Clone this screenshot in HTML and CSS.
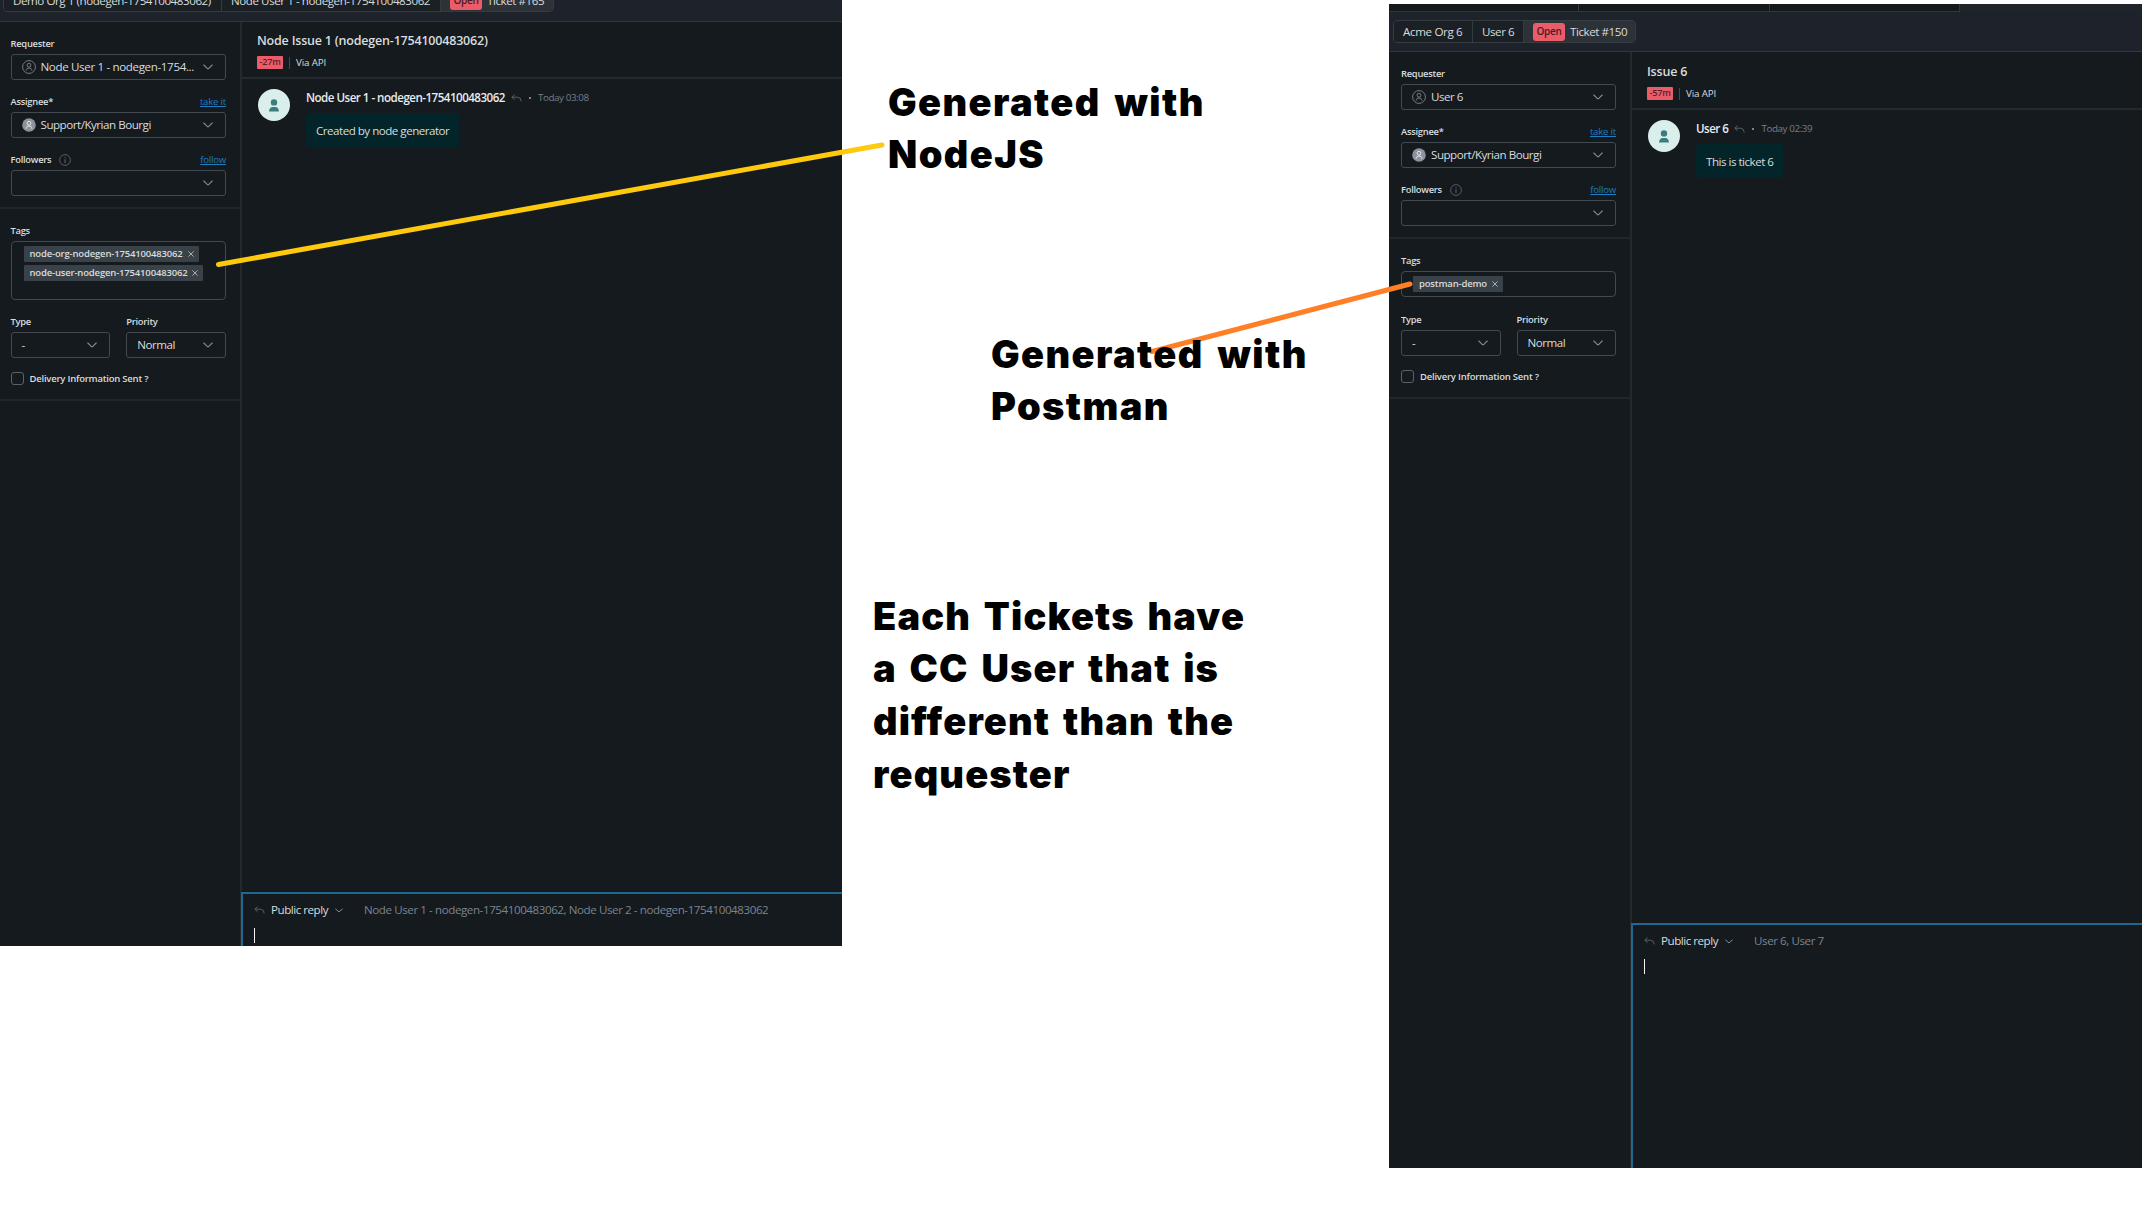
FILE: index.html
```html
<!DOCTYPE html>
<html lang="en">
<head>
<meta charset="utf-8">
<title>Generated tickets</title>
<link rel="stylesheet" href="styles.css">
</head>
<body>
<svg class="defs" width="0" height="0" aria-hidden="true">
  <symbol id="chev" viewBox="0 0 10 6"><path d="M.8 1 L4 4.2 Q5 5 6 4.2 L9.2 1" fill="none" stroke="currentColor" stroke-width="1.1" stroke-linecap="round"/></symbol>
  <symbol id="user-o" viewBox="0 0 14 14"><circle cx="7" cy="7" r="6.4" fill="none" stroke="currentColor"/><circle cx="7" cy="5.2" r="1.9" fill="none" stroke="currentColor"/><path d="M4.2 10.6 V9.8 Q4.4 8 7 8 T9.8 9.8 V10.6" fill="none" stroke="currentColor"/></symbol>
  <symbol id="user-f" viewBox="0 0 14 14"><circle cx="7" cy="7" r="6.8" fill="#8a939d"/><circle cx="7" cy="5.2" r="1.9" fill="none" stroke="#e3e6e8"/><path d="M4.2 10.8 V9.8 Q4.4 8 7 8 T9.8 9.8 V10.8" fill="none" stroke="#e3e6e8"/></symbol>
  <symbol id="info" viewBox="0 0 12 12"><circle cx="6" cy="6" r="5.4" fill="none" stroke="currentColor" stroke-width=".9"/><path d="M6 5.2V9M6 3V4.1" stroke="currentColor"/></symbol>
  <symbol id="person" viewBox="0 0 10 13"><circle cx="5" cy="3.4" r="3.2" fill="currentColor"/><path d="M0 12.6 Q.4 8 3.6 8 H6.4 Q9.6 8 10 12.6Z" fill="currentColor"/></symbol>
  <symbol id="reply" viewBox="0 0 11 8"><path d="M3.6 .6 L.8 3.2 L3.6 5.8 M.8 3.2 H6.5 Q10.2 3.4 10.2 7.4" fill="none" stroke="currentColor"/></symbol>
  <symbol id="x" viewBox="0 0 6 6"><path d="M.4 .4 L5.6 5.6 M5.6 .4 L.4 5.6" stroke="currentColor" stroke-width=".9"/></symbol>
</svg>
<div class="canvas">
  <section class="panel panel-node">
    <header class="topbar">
      <nav class="crumbs">
        <span class="crumb c-org">Demo Org 1 (nodegen-1754100483062)</span>
        <span class="crumb c-user">Node User 1 - nodegen-1754100483062</span>
        <span class="crumb active"><b class="open">Open</b>Ticket #165</span>
      </nav>
    </header>
    <div class="columns">
      <aside class="side">
        <div class="group people">
          <div class="label"><span>Requester</span></div>
          <div class="field"><svg class="who outline"><use href="#user-o"/></svg><span class="value">Node User 1 - nodegen-1754...</span><svg class="chev"><use href="#chev"/></svg></div>
          <div class="label"><span>Assignee*</span><a>take it</a></div>
          <div class="field"><svg class="who"><use href="#user-f"/></svg><span class="value tight">Support/Kyrian Bourgi</span><svg class="chev"><use href="#chev"/></svg></div>
          <div class="label"><span>Followers</span><svg class="info"><use href="#info"/></svg><a>follow</a></div>
          <div class="field"><span class="value"></span><svg class="chev"><use href="#chev"/></svg></div>
        </div>
        <div class="group meta">
          <div class="label"><span>Tags</span></div>
          <div class="tags">
            <span class="tag">node-org-nodegen-1754100483062<svg><use href="#x"/></svg></span>
            <span class="tag">node-user-nodegen-1754100483062<svg><use href="#x"/></svg></span>
          </div>
          <div class="pair">
            <div><div class="label"><span>Type</span></div><div class="field"><span class="value">-</span><svg class="chev"><use href="#chev"/></svg></div></div>
            <div><div class="label"><span>Priority</span></div><div class="field"><span class="value tight">Normal</span><svg class="chev"><use href="#chev"/></svg></div></div>
          </div>
          <div class="check"><i class="box"></i><span>Delivery Information Sent ?</span></div>
        </div>
      </aside>
      <main class="main">
        <div class="head"><h1>Node Issue 1 (nodegen-1754100483062)</h1><div class="sub"><b class="sla">-27m</b><i class="bar"></i><span>Via API</span></div></div>
        <div class="thread">
          <div class="avatar"><svg><use href="#person"/></svg></div>
          <div class="msg">
            <div class="by"><b>Node User 1 - nodegen-1754100483062</b><svg class="reply"><use href="#reply"/></svg><i class="dot"></i><time>Today 03:08</time></div>
            <p class="bubble">Created by node generator</p>
          </div>
        </div>
        <div class="composer">
          <div class="mode"><svg class="reply"><use href="#reply"/></svg><span class="kind">Public reply</span><svg class="chev small"><use href="#chev"/></svg><span class="cc">Node User 1 - nodegen-1754100483062, Node User 2 - nodegen-1754100483062</span></div>
          <i class="caret"></i>
        </div>
      </main>
    </div>
  </section>
  <section class="notes">
    <p class="note n1">Generated with<br>NodeJS</p>
    <p class="note n2">Generated with<br>Postman</p>
    <p class="note n3">Each Tickets have<br>a CC User that is<br>different than the<br>requester</p>
  </section>
  <section class="panel panel-postman">
    <div class="strip"><i></i><i></i><i></i></div>
    <header class="topbar">
      <nav class="crumbs">
        <span class="crumb c-org">Acme Org 6</span>
        <span class="crumb c-user">User 6</span>
        <span class="crumb active"><b class="open">Open</b>Ticket #150</span>
      </nav>
    </header>
    <div class="columns">
      <aside class="side">
        <div class="group people">
          <div class="label"><span>Requester</span></div>
          <div class="field"><svg class="who outline"><use href="#user-o"/></svg><span class="value tight">User 6</span><svg class="chev"><use href="#chev"/></svg></div>
          <div class="label"><span>Assignee*</span><a>take it</a></div>
          <div class="field"><svg class="who"><use href="#user-f"/></svg><span class="value tight">Support/Kyrian Bourgi</span><svg class="chev"><use href="#chev"/></svg></div>
          <div class="label"><span>Followers</span><svg class="info"><use href="#info"/></svg><a>follow</a></div>
          <div class="field"><span class="value"></span><svg class="chev"><use href="#chev"/></svg></div>
        </div>
        <div class="group meta">
          <div class="label"><span>Tags</span></div>
          <div class="tags">
            <span class="tag">postman-demo<svg><use href="#x"/></svg></span>
          </div>
          <div class="pair">
            <div><div class="label"><span>Type</span></div><div class="field"><span class="value">-</span><svg class="chev"><use href="#chev"/></svg></div></div>
            <div><div class="label"><span>Priority</span></div><div class="field"><span class="value tight">Normal</span><svg class="chev"><use href="#chev"/></svg></div></div>
          </div>
          <div class="check"><i class="box"></i><span>Delivery Information Sent ?</span></div>
        </div>
      </aside>
      <main class="main">
        <div class="head"><h1>Issue 6</h1><div class="sub"><b class="sla">-57m</b><i class="bar"></i><span>Via API</span></div></div>
        <div class="thread">
          <div class="avatar"><svg><use href="#person"/></svg></div>
          <div class="msg">
            <div class="by"><b>User 6</b><svg class="reply"><use href="#reply"/></svg><i class="dot"></i><time>Today 02:39</time></div>
            <p class="bubble">This is ticket 6</p>
          </div>
        </div>
        <div class="composer">
          <div class="mode"><svg class="reply"><use href="#reply"/></svg><span class="kind">Public reply</span><svg class="chev small"><use href="#chev"/></svg><span class="cc">User 6, User 7</span></div>
          <i class="caret"></i>
        </div>
      </main>
    </div>
  </section>
  <svg class="pointers" viewBox="0 0 2142 1221" aria-hidden="true">
    <path d="M218.5 264.5L882 145" stroke="#ffc90e"/>
    <path d="M1152 351.5L1410 284" stroke="#ff7f27"/>
  </svg>
</div>
</body>
</html>
```
FILE: styles.css
```css
* { box-sizing: border-box; }
body { margin: 0; background: #fff; }
.defs { position: absolute; }
.canvas {
  position: relative;
  display: flex;
  align-items: flex-start;
  width: 2142px;
  height: 1221px;
  overflow: hidden;
}

/* pen strokes drawn over the panels, under the note text */
.pointers { position: absolute; left: 0; top: 0; width: 2142px; height: 1221px; z-index: 1; }
.pointers path { fill: none; stroke-width: 5; stroke-linecap: round; }

.notes {
  position: relative;
  z-index: 2;
  width: 547px;
  color: #000;
  font: 900 38px/52.4px Inter, "Liberation Sans", sans-serif;
  letter-spacing: 1.4px;
  word-spacing: 5px;
}
.note { margin: 0; white-space: nowrap; }
.n1 { padding: 76px 0 0 46px; }
.n2 { padding: 147px 0 0 149px; }
.n3 { padding: 157px 0 0 31px; line-height: 52.7px; letter-spacing: 1.15px; word-spacing: 4px; }

.panel {
  display: flex;
  flex-direction: column;
  overflow: hidden;
  background: #151a1e;
  color: #d8dcde;
  font: 11.6px/14px "Open Sans", "Noto Sans", sans-serif;
  white-space: nowrap;
}
.panel-node { width: 842px; height: 946px; }
.panel-postman { width: 753px; height: 1164px; margin-top: 4px; }
svg { display: block; flex: none; }

.strip {
  display: flex;
  flex: none;
  width: 571px;
  height: 8px;
  background: #14191c;
  border-bottom: 1px solid #30363c;
}
.panel-postman { background: linear-gradient(#1f232a 0 20px, #151a1e 20px); }
.strip i { flex: 1; border-right: 1px solid #30363c; }
.topbar { flex: none; display: flex; background: #1e222a; border-bottom: 1px solid #30363c; }
.panel-node .topbar { height: 22px; padding-left: 3px; }
.panel-postman .topbar { height: 40px; padding: 8px 0 0 4px; }
.crumbs {
  display: flex;
  height: 23px;
  border: 1px solid #343b41;
  border-radius: 4px;
  overflow: hidden;
  letter-spacing: -.44px;
}
.panel-node .crumbs { margin-top: -11px; width: 551px; }
.panel-postman .crumbs { width: 243px; line-height: 13px; }
.crumb { display: flex; align-items: center; padding-left: 9px; border-right: 1px solid #343b41; background: #1b2025; }
.crumb.active { flex: 1; background: #2c3237; border-right: 0; }
.panel-node .c-org { width: 218px; }
.panel-node .c-user { width: 219px; }
.panel-postman .c-org { width: 79px; letter-spacing: -.35px; }
.panel-postman .c-user { width: 51px; }
.open {
  width: 32px;
  height: 18px;
  margin-right: 5px;
  border-radius: 3px;
  background: #eb5c69;
  color: #471c25;
  font: 600 10px/17px "Open Sans", sans-serif;
  letter-spacing: -.3px;
  text-align: center;
}

.columns { display: flex; flex: 1; min-height: 0; background: #151a1e; }
.side { width: 242px; padding-left: 0; border-right: 2px solid #24292e; }
.panel-postman .side { width: 243px; }
.group { padding: 14px 14px 0 10.5px; border-bottom: 2px solid #20262a; }
.panel-postman .group { padding-left: 12px; padding-right: 14px; }
.people { height: 187px; }
.label { display: flex; align-items: center; height: 15px; margin-bottom: 3px; font-size: 9.4px; font-weight: 600; letter-spacing: -.28px; }
.label a { margin-left: auto; color: #1f7cc0; font-size: 9.6px; font-weight: 400; text-decoration: underline; letter-spacing: -.2px; }
.info { width: 12px; height: 12px; margin-left: 8px; color: #5c6269; }
.field {
  display: flex;
  align-items: center;
  height: 26px;
  padding: 0 12px 0 10px;
  border: 1px solid #42494f;
  border-radius: 3px;
}
.people .field { margin-bottom: 14px; }
.who { width: 14px; height: 14px; margin-right: 5px; }
.who.outline { color: #757c83; }
.value { flex: 1; letter-spacing: -.36px; }
.value.tight { letter-spacing: -.48px; }
.chev { width: 10px; height: 6px; color: #858b91; }
.meta { padding-top: 14px; }
.tags {
  display: flex;
  flex-direction: column;
  align-items: flex-start;
  gap: 3px;
  height: 59px;
  padding: 4px 0 0 12px;
  border: 1px solid #42494f;
  border-radius: 4px;
}
.panel-postman .tags { height: 26px; padding: 4px 0 0 11px; }
.tag {
  display: flex;
  align-items: center;
  height: 16px;
  padding: 0 5px 0 6px;
  border-radius: 1px;
  background: #394249;
  font-size: 9.5px;
  font-weight: 600;
  letter-spacing: -.17px;
}
.tag svg { width: 6px; height: 6px; margin-left: 5px; color: #b3b9be; }
.pair { display: flex; gap: 16px; padding-top: 14px; }
.panel-postman .pair { padding-top: 15px; }
.pair > div { flex: 1; }
.check { display: flex; align-items: center; height: 13px; margin: 14px 0; font-size: 9.5px; font-weight: 600; letter-spacing: -.22px; }
.box { width: 13px; height: 13px; margin-right: 6px; border: 1px solid #5a6168; border-radius: 3px; }

.main { display: flex; flex: 1; min-width: 0; flex-direction: column; }
.head { height: 57px; padding: 10px 0 0 15px; border-bottom: 2px solid #24292e; }
h1 { margin: 0; font: 600 12.5px/17px "Open Sans", sans-serif; letter-spacing: -.2px; }
.sub { display: flex; align-items: center; height: 13px; margin-top: 7px; font-size: 9.8px; letter-spacing: -.15px; }
.sla {
  width: 26px;
  height: 13px;
  border-radius: 1px;
  background: #eb5c69;
  color: #5a1f29;
  font: 600 9px/12px "Open Sans", sans-serif;
  text-align: center;
}
.bar { width: 1px; height: 12px; margin: 0 6px; background: #42494f; }
.thread { display: flex; flex: 1; padding: 10px 0 0 16px; }
.avatar {
  display: flex;
  align-items: center;
  justify-content: center;
  width: 32px;
  height: 32px;
  border-radius: 50%;
  background: #daeeec;
  color: #3b7d7f;
}
.avatar svg { width: 10px; height: 13px; }
.msg { margin-left: 16px; }
.by { display: flex; align-items: center; height: 18px; margin-bottom: 6px; }
.by b { font-weight: 600; letter-spacing: -.52px; color: #e9ebed; }
.reply { width: 11px; height: 8px; color: #596067; }
.by .reply { margin-left: 6px; }
.dot { width: 2px; height: 2px; margin: 0 7px; border-radius: 50%; background: #a0a7ae; }
time { color: #767e88; font-size: 9.8px; letter-spacing: -.4px; }
.bubble {
  width: max-content;
  height: 34px;
  margin: 0;
  padding: 0 10px;
  border-radius: 3px;
  background: #032429;
  line-height: 35px;
  letter-spacing: -.5px;
}
.panel-postman .head { height: 58px; padding-top: 11px; }
.composer {
  height: 54px;
  margin-left: -1px;
  padding: 9px 0 0 11px;
  border-top: 2px solid #226792;
  border-left: 2px solid #226792;
}
.panel-postman .composer { height: 245px; }
.mode { display: flex; align-items: center; height: 14px; }
.kind { width: 57px; margin-left: 6px; letter-spacing: -.47px; }
.chev.small { width: 8px; height: 5px; margin-left: 7px; color: #a0a6ac; }
.cc { margin-left: 21px; color: #7b8490; letter-spacing: -.425px; }
.caret { display: block; width: 1px; height: 15px; margin-top: 11px; background: #f1f3f4; }
```
